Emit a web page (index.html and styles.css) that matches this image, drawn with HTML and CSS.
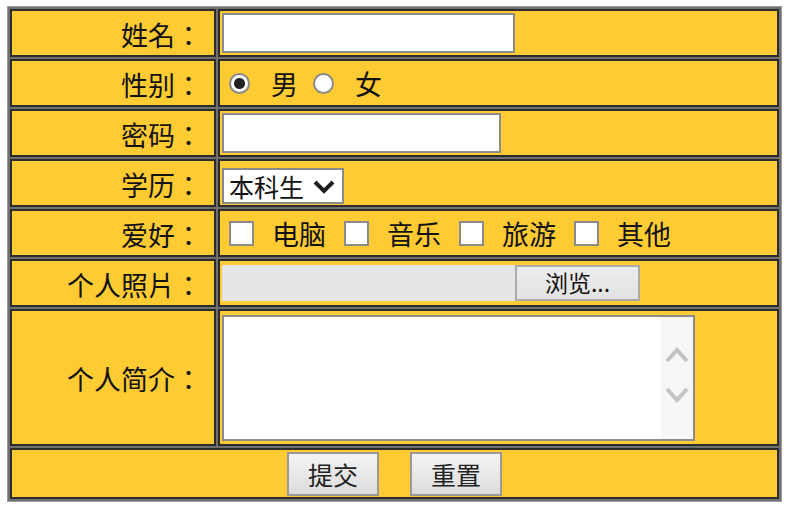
FILE: index.html
```html
<!DOCTYPE html>
<html lang="zh-CN">

<head>
    <meta charset="UTF-8">
    <meta name="viewport" content="width=device-width, initial-scale=1.0">
    <title>用户注册</title>
    <link rel="stylesheet" href="styles.css">
</head>

<body>
    <form>
        <table class="form">
            <tr>
                <td class="label" lang="zh-TW">姓名：</td>
                <td class="value"><input class="text" type="text" name="name"></td>
            </tr>
            <tr>
                <td class="label" lang="zh-TW">性别：</td>
                <td class="value">
                    <div class="opts">
                        <input class="radio" type="radio" name="sex" checked><span class="opt">男</span>
                        <input class="radio" type="radio" name="sex"><span class="opt">女</span>
                    </div>
                </td>
            </tr>
            <tr>
                <td class="label" lang="zh-TW">密码：</td>
                <td class="value"><input class="text pwd" type="password" name="pwd"></td>
            </tr>
            <tr>
                <td class="label" lang="zh-TW">学历：</td>
                <td class="value">
                    <span class="select">本科生
                        <svg width="22" height="16" viewBox="0 0 22 16"><polyline points="2,4 11,13 20,4" fill="none" stroke="#1e1e1e" stroke-width="4"/></svg>
                    </span>
                </td>
            </tr>
            <tr>
                <td class="label" lang="zh-TW">爱好：</td>
                <td class="value">
                    <div class="opts">
                        <input class="check" type="checkbox"><span class="opt wide">电脑</span>
                        <input class="check" type="checkbox"><span class="opt wide">音乐</span>
                        <input class="check" type="checkbox"><span class="opt wide">旅游</span>
                        <input class="check" type="checkbox"><span class="opt wide">其他</span>
                    </div>
                </td>
            </tr>
            <tr>
                <td class="label" lang="zh-TW">个人照片：</td>
                <td class="value">
                    <div class="file">
                        <span class="file-name"></span>
                        <span class="file-btn">浏览...</span>
                    </div>
                </td>
            </tr>
            <tr class="tall">
                <td class="label" lang="zh-TW">个人简介：</td>
                <td class="value">
                    <div class="area">
                        <textarea name="intro"></textarea>
                        <div class="scroll">
                            <svg width="24" height="18" viewBox="0 0 24 18"><polyline points="2,15 12,4 22,15" fill="none" stroke="#c2c2c2" stroke-width="4"/></svg>
                            <svg width="24" height="18" viewBox="0 0 24 18"><polyline points="2,3 12,14 22,3" fill="none" stroke="#c2c2c2" stroke-width="4"/></svg>
                        </div>
                    </div>
                </td>
            </tr>
            <tr class="last">
                <td colspan="2" class="buttons">
                    <div class="btns">
                        <button type="submit">提交</button>
                        <button type="reset">重置</button>
                    </div>
                </td>
            </tr>
        </table>
    </form>
</body>

</html>
```

FILE: styles.css
```css
* {
    box-sizing: border-box;
}

body {
    margin: 6px 0 0 7px;
    font-family: "Noto Sans CJK SC", sans-serif;
    color: #111;
}

.form {
    width: 775px;
    border: 1px solid #9a9a9a;
    background: #707070;
    border-spacing: 2px;
}

.form tr {
    height: 48px;
}

.form tr.tall {
    height: 137px;
}

.form tr.last {
    height: 51px;
}

.form td {
    border: 2px solid #2c2c2c;
    background: #ffcb33;
    padding: 0 2px;
}

td.label {
    width: 206px;
    text-align: right;
    padding: 2px 12px 0 0;
    font-family: "Noto Sans CJK TC", sans-serif;
    font-size: 27px;
}

td.value {
    font-size: 27px;
}

.text {
    display: block;
    width: 293px;
    height: 40px;
    border: 2px solid #8c8c8c;
    background: #fff;
    margin: 0;
}

.text.pwd {
    width: 279px;
}

.opts {
    display: flex;
    align-items: center;
}

.radio {
    appearance: none;
    width: 21px;
    height: 21px;
    margin: 0 21px 0 7px;
    border: 2px solid #8a8a8a;
    border-radius: 50%;
    background: #fff;
}

.radio:checked {
    background: radial-gradient(circle, #222 0 5px, #fff 6px);
}

.radio + .opt {
    margin-right: 8px;
}

.check {
    appearance: none;
    width: 25px;
    height: 25px;
    margin: 0 18px 0 7px;
    border: 2px solid #8a8a8a;
    background: #fff;
}

.opt.wide {
    margin-right: 11px;
}

.select {
    display: inline-flex;
    align-items: center;
    gap: 9px;
    height: 36px;
    padding: 0 7px 0 5px;
    border: 2px solid #8a8a8a;
    background: #fff;
    font-size: 25px;
    vertical-align: middle;
}

.file {
    display: flex;
    height: 36px;
}

.file-name {
    width: 293px;
    background: #e6e6e6;
}

.file-btn {
    width: 125px;
    border: 2px solid #ababab;
    background: linear-gradient(#ededed, #e2e2e2);
    font-size: 23px;
    text-align: center;
    line-height: 31px;
}

.area {
    display: flex;
    width: 473px;
    height: 126px;
    border: 2px solid #8c8c8c;
    background: #fff;
}

.area textarea {
    flex: 1;
    border: none;
    resize: none;
    outline: none;
}

.scroll {
    width: 32px;
    background: #f6f6f6;
    display: flex;
    flex-direction: column;
    align-items: center;
    gap: 22px;
    padding-top: 29px;
}

.btns {
    display: flex;
    justify-content: center;
    gap: 31px;
}

.btns button {
    width: 92px;
    height: 44px;
    border: 2px solid #999;
    background: linear-gradient(#f4f4f4, #dcdcdc);
    font-family: "Noto Sans CJK SC", sans-serif;
    font-size: 25px;
    color: #222;
    padding: 0;
}
```
